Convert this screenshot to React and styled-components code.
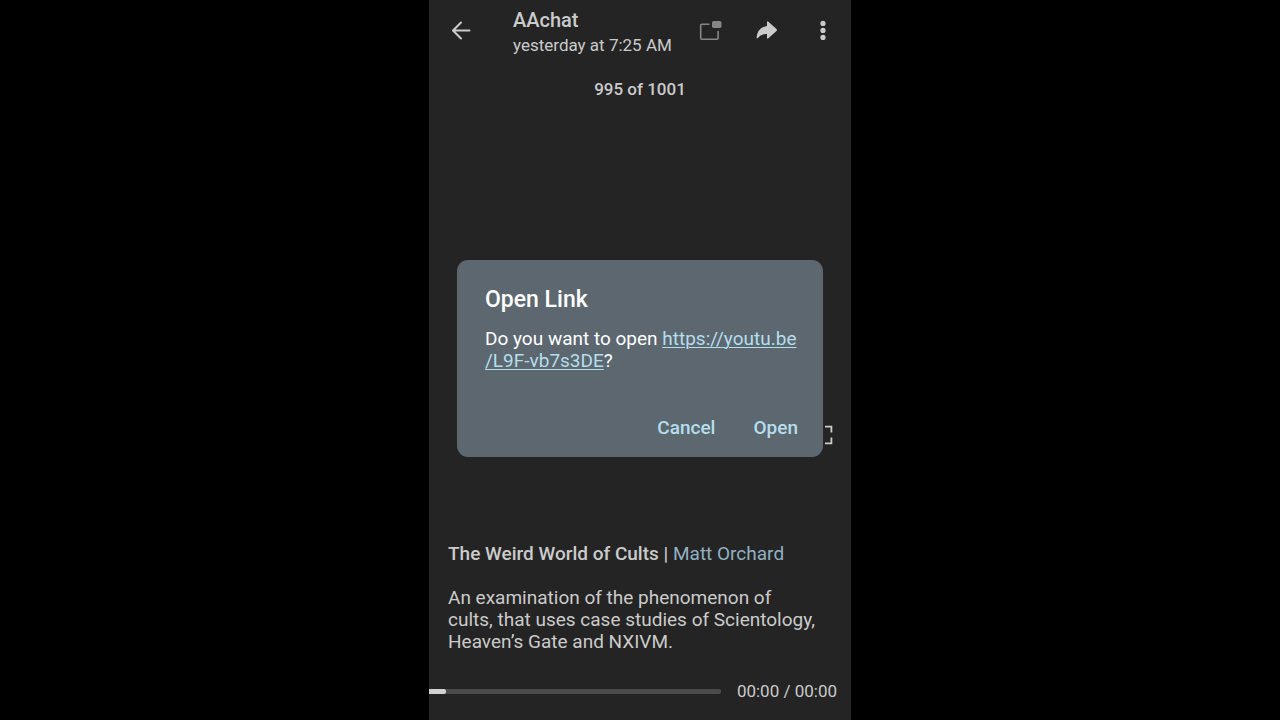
import React from "react";
import styled, { createGlobalStyle } from "styled-components";

const GlobalStyle = createGlobalStyle`
  * {
    box-sizing: border-box;
  }

  body {
    margin: 0;
    background: #000;
    font-family: Roboto, "Noto Sans", sans-serif;
  }

  button {
    padding: 0;
    border: 0;
    background: none;
    color: inherit;
    font-family: inherit;
  }
`;

const Phone = styled.main`
  position: relative;
  display: flex;
  flex-direction: column;
  width: 100%;
  max-width: 422px;
  min-height: 100vh;
  margin: 0 auto;
  background: #242424;
  color: #cbcbcb;
`;

const Header = styled.header`
  display: flex;
  align-items: center;
  height: 60px;
`;

const IconButton = styled.button`
  display: flex;
  justify-content: center;
  align-items: center;
  width: ${(props) => (props.$wide ? "64px" : "56px")};
  height: 60px;
  color: ${(props) => (props.$dim ? "#868686" : "#cbcbcb")};
`;

const ChatInfo = styled.div`
  flex: 1;
  padding: 6px 0 0 20px;
  line-height: 25px;
  white-space: nowrap;
`;

const ChatName = styled.h1`
  margin: 0;
  font-size: 20px;
  font-weight: 500;
`;

const ChatDate = styled.p`
  margin: 0;
  font-size: 17px;
`;

const Counter = styled.p`
  margin: 18px 0 0;
  font-size: 17px;
  font-weight: 500;
  line-height: 22px;
  text-align: center;
`;

const Stage = styled.section`
  flex: 1;
  display: flex;
  justify-content: flex-end;
  align-items: flex-end;
  padding: 0 18px 98px;
`;

const FullscreenButton = styled.button`
  display: flex;
  color: #cbcbcb;
`;

const Caption = styled.section`
  padding: 0 19px;
  font-size: 19px;
  line-height: 22px;
`;

const CaptionTitle = styled.h2`
  margin: 0 0 22px;
  font-size: 19px;
  font-weight: 500;
`;

const CaptionText = styled.p`
  max-width: 368px;
  margin: 0;
`;

const AuthorLink = styled.a`
  color: #91b1c2;
  font-weight: 400;
  text-decoration: none;
`;

const Player = styled.footer`
  display: flex;
  align-items: center;
  gap: 16px;
  height: 58px;
  margin-top: 9px;
  padding-right: 14px;
`;

const Seek = styled.input`
  appearance: none;
  flex: 1;
  min-width: 0;
  height: 5px;
  margin: 0;
  border-radius: 0 2px 2px 0;
  background: #4b4b4b;

  &::-webkit-slider-thumb {
    appearance: none;
    width: 17px;
    height: 5px;
    border-radius: 0 2px 2px 0;
    background: #d2d2d2;
  }
`;

const Time = styled.span`
  font-size: 17px;
  line-height: 22px;
`;

const Overlay = styled.div`
  position: absolute;
  inset: 0;
  display: flex;
  align-items: center;
  padding: 0 28px 3px;
`;

const Dialog = styled.section`
  width: 100%;
  padding: 26px 25px 15px 28px;
  border-radius: 11px;
  background: #5c6770;
  color: #fff;
`;

const DialogTitle = styled.h2`
  margin: 0 0 14px;
  font-size: 23px;
  font-weight: 500;
  line-height: 28px;
`;

const DialogText = styled.p`
  margin: 0;
  font-size: 19px;
  line-height: 22px;
`;

const DialogLink = styled.a`
  color: #b5deec;
  text-decoration: underline;
  text-decoration-thickness: 1px;
  text-underline-offset: 2px;
`;

const DialogActions = styled.div`
  display: flex;
  justify-content: flex-end;
  gap: 38px;
  margin-top: 42px;
`;

const DialogButton = styled.button`
  && {
    color: #b5deec;
  }
  font-size: 19px;
  font-weight: 500;
  line-height: 28px;
`;

const App = () => {
  return (
    <>
      <GlobalStyle />
      <Phone>
        <Header>
          <IconButton $wide aria-label="Back">
            <svg width="20" height="20" viewBox="0 0 20 20" fill="none" stroke="currentColor" strokeWidth="2" strokeLinecap="round" strokeLinejoin="round">
              <path d="M18.5 10.5H2.5M10 2.5L2 10.5L10 18.5" />
            </svg>
          </IconButton>
          <ChatInfo>
            <ChatName>AAchat</ChatName>
            <ChatDate>yesterday at 7:25 AM</ChatDate>
          </ChatInfo>
          <IconButton $dim aria-label="Picture in picture">
            <svg width="24" height="22" viewBox="0 0 24 22" fill="none">
              <path d="M10.5 5.2H2.8Q1.7 5.2 1.7 6.3V19.1Q1.7 20.2 2.8 20.2H18Q19.1 20.2 19.1 19.1V12" stroke="currentColor" strokeWidth="1.6" />
              <rect x="13" y="2" width="9.5" height="7" rx="1.8" fill="currentColor" />
            </svg>
          </IconButton>
          <IconButton aria-label="Share">
            <svg width="22" height="20" viewBox="0 0 22 20" fill="currentColor">
              <path d="M11 2.2Q11 .4 12.4 1.7L20.5 9.1Q21.4 10 20.5 10.9L12.4 18.3Q11 19.4 11 17.8V14Q5 13.7 1.8 18Q.5 19 .6 17.5Q1.5 7.5 11 6Z" />
            </svg>
          </IconButton>
          <IconButton aria-label="More options">
            <svg width="6" height="20" viewBox="0 0 6 20" fill="currentColor">
              <circle cx="3" cy="3.4" r="2.6" />
              <circle cx="3" cy="10.4" r="2.6" />
              <circle cx="3" cy="17.4" r="2.6" />
            </svg>
          </IconButton>
        </Header>
        <Counter>995 of 1001</Counter>
        <Stage>
          <FullscreenButton aria-label="Full screen">
            <svg width="20" height="20" viewBox="0 0 20 20" fill="none" stroke="currentColor" strokeWidth="1.8">
              <path d="M7 1.7H1V7.5M12 1.7H18.4V7.5M7 18.4H1V12.5M12 18.4H18.4V12.5" />
            </svg>
          </FullscreenButton>
        </Stage>
        <Caption>
          <CaptionTitle>
            The Weird World of Cults | <AuthorLink href="#">Matt Orchard</AuthorLink>
          </CaptionTitle>
          <CaptionText>
            An examination of the phenomenon of cults, that uses case studies of Scientology, Heaven’s Gate and NXIVM.
          </CaptionText>
        </Caption>
        <Player>
          <Seek type="range" min="0" max="100" defaultValue="0" aria-label="Seek" />
          <Time>00:00 / 00:00</Time>
        </Player>
        <Overlay>
          <Dialog role="dialog" aria-labelledby="dialog-title">
            <DialogTitle id="dialog-title">Open Link</DialogTitle>
            <DialogText>
              Do you want to open{" "}
              <DialogLink href="#">
                https://youtu.be
                <wbr />
                /L9F-vb7s3DE
              </DialogLink>
              ?
            </DialogText>
            <DialogActions>
              <DialogButton>Cancel</DialogButton>
              <DialogButton>Open</DialogButton>
            </DialogActions>
          </Dialog>
        </Overlay>
      </Phone>
    </>
  );
};

export default App;
